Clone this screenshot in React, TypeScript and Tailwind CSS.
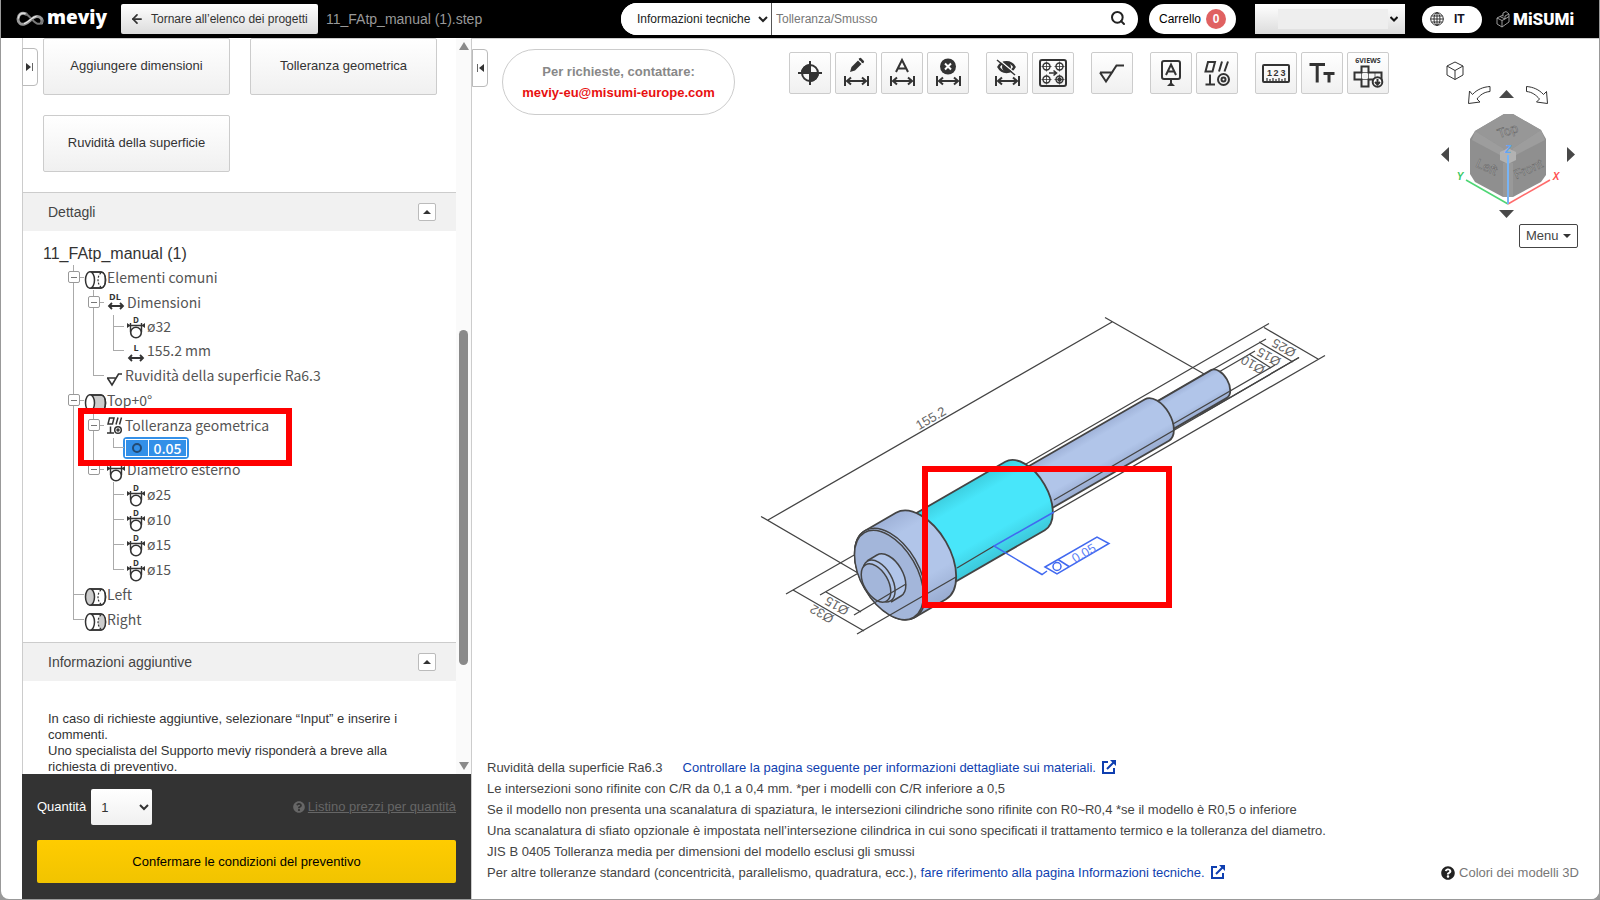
import React from 'react';
import { ArrowLeft, Search } from 'lucide-react';
import { FaQuestionCircle } from 'react-icons/fa';

type Guide = 'line' | 'tee' | 'elbow' | 'open' | 'openLast' | 'blank';
type IconName = 'common' | 'side' | 'left' | 'right' | 'dl' | 'd' | 'l' | 'rough' | 'geo';

interface TreeRow {
  guides: Guide[];
  icon?: IconName;
  label: string;
  height: string;
  selected?: boolean;
}

const TREE: TreeRow[] = [
  { guides: ['open'], icon: 'common', label: 'Elementi comuni', height: 'h-[25px]' },
  { guides: ['line', 'open'], icon: 'dl', label: 'Dimensioni', height: 'h-[25px]' },
  { guides: ['line', 'line', 'tee'], icon: 'd', label: 'ø32', height: 'h-[23px]' },
  { guides: ['line', 'line', 'elbow'], icon: 'l', label: '155.2 mm', height: 'h-[25px]' },
  { guides: ['line', 'elbow'], icon: 'rough', label: 'Ruvidità della superficie Ra6.3', height: 'h-[25px]' },
  { guides: ['open'], icon: 'side', label: 'Top+0°', height: 'h-[25px]' },
  { guides: ['line', 'open'], icon: 'geo', label: 'Tolleranza geometrica', height: 'h-[25px]' },
  { guides: ['line', 'line', 'elbow'], label: '0.05', height: 'h-[19px]', selected: true },
  { guides: ['line', 'openLast'], icon: 'd', label: 'Diametro esterno', height: 'h-[25px]' },
  { guides: ['line', 'blank', 'tee'], icon: 'd', label: 'ø25', height: 'h-[25px]' },
  { guides: ['line', 'blank', 'tee'], icon: 'd', label: 'ø10', height: 'h-[25px]' },
  { guides: ['line', 'blank', 'tee'], icon: 'd', label: 'ø15', height: 'h-[25px]' },
  { guides: ['line', 'blank', 'elbow'], icon: 'd', label: 'ø15', height: 'h-[25px]' },
  { guides: ['tee'], icon: 'left', label: 'Left', height: 'h-[25px]' },
  { guides: ['elbow'], icon: 'right', label: 'Right', height: 'h-[25px]' },
];

const Cylinder: React.FC<{ kind: IconName }> = ({ kind }) => (
  <svg viewBox="0 0 23 20" className="mt-1 h-5 w-[23px] shrink-0" fill="none" stroke="#333" strokeWidth="1.5">
    <path d="M6 2H17C23 2 23 18 17 18H6Z" fill={kind === 'side' ? '#ccc' : '#fff'} />
    {kind === 'right' && <path d="M17 2C13 6 13 14 17 18C23 16 23 4 17 2Z" fill="#ccc" stroke="none" />}
    {kind !== 'side' && <path d="M17 3C13 6 13 14 17 17" strokeDasharray="2 1.5" strokeWidth="1.2" />}
    <path d="M6 2H17C23 2 23 18 17 18H6" />
    <ellipse cx="6" cy="10" rx="4.500" ry="8.200" fill={kind === 'left' ? '#ccc' : '#fff'} />
  </svg>
);

const DoubleArrow: React.FC<{ y: number; x1: number; x2: number }> = ({ y, x1, x2 }) => (
  <path
    d={`M${x1} ${y}H${x2}M${x1 + 3} ${y - 3}L${x1} ${y}L${x1 + 3} ${y + 3}M${x2 - 3} ${y - 3}L${x2} ${y}L${x2 - 3} ${y + 3}`}
    fill="none"
    stroke="#333"
    strokeWidth="1.8"
  />
);

const LETTER_ICON = "h-[30px] w-[23px] shrink-0 font-['Open_Sans',sans-serif] font-bold";

const TreeIcon: React.FC<{ name: IconName }> = ({ name }) => {
  switch (name) {
    case 'dl':
      return (
        <svg viewBox="0 0 23 30" className={LETTER_ICON} fill="#333">
          <text x="5" y="12" fontSize="9">DL</text>
          <DoubleArrow y={18} x1={5} x2={19} />
        </svg>
      );
    case 'l':
      return (
        <svg viewBox="0 0 23 30" className={LETTER_ICON} fill="#333">
          <text x="9.500" y="15" fontSize="9">L</text>
          <DoubleArrow y={22} x1={5} x2={19} />
        </svg>
      );
    case 'd':
      return (
        <svg viewBox="0 0 23 30" className={LETTER_ICON} fill="#333">
          <text x="9" y="11" fontSize="8">D</text>
          <path d="M3 13.500H21M6.500 11V20M17.500 11V20" stroke="#333" strokeWidth="1.400" fill="none" />
          <path d="M3 11L6.500 13.500L3 16ZM21 11L17.500 13.500L21 16Z" />
          <circle cx="12" cy="20.500" r="5.300" fill="#fff" stroke="#333" strokeWidth="1.600" />
        </svg>
      );
    case 'rough':
      return (
        <svg viewBox="0 0 21 20" className="mt-2 h-5 w-[21px] shrink-0" fill="none" stroke="#333" strokeWidth="1.6">
          <path d="M3 8H11.500M3.500 8L8 15L14.500 4H18" />
        </svg>
      );
    case 'geo':
      return (
        <svg viewBox="0 0 21 20" className="h-5 w-[21px] shrink-0" fill="none" stroke="#333" strokeWidth="1.5">
          <path d="M5.500 2H10L8.500 8H4ZM12 8.500L14 1.500M15.500 8.500L17.500 1.500M6.500 10.500V17M3 17H10" />
          <circle cx="14" cy="14" r="3.300" />
          <circle cx="14" cy="14" r="1" />
        </svg>
      );
    default:
      return <Cylinder kind={name} />;
  }
};

const GuideCell: React.FC<{ guide: Guide }> = ({ guide }) => {
  const toggle = guide === 'open' || guide === 'openLast';
  const branch = toggle || guide === 'tee' || guide === 'elbow';
  const below = guide === 'line' || guide === 'tee' || guide === 'open';
  return (
    <div className="relative flex w-5 shrink-0 flex-col self-stretch pl-[9px]">
      <div className={`h-1/2 border-[#aaa] ${guide === 'blank' ? '' : 'border-l'} ${branch ? 'border-b' : ''}`} />
      <div className={`h-1/2 border-[#aaa] ${below ? 'border-l' : ''}`} />
      {toggle && (
        <button
          aria-label="Comprimi"
          className="absolute left-1 top-1.5 flex h-3 w-3 items-center justify-center rounded-xs border border-[#999] bg-white"
        >
          <span className="h-px w-1.5 bg-[#777]" />
        </button>
      )}
    </div>
  );
};

const FeatureTree: React.FC = () => (
  <div className="relative pb-2.5 pl-[41px] pt-[34px] text-sm text-[#555] font-['Noto_Sans_CJK_JP','Noto_Sans',sans-serif]">
    <ul>
      {TREE.map((row, index) => (
        <li key={index} className={`flex items-center ${row.height}`}>
          {row.guides.map((guide, i) => (
            <GuideCell key={i} guide={guide} />
          ))}
          {row.icon && <TreeIcon name={row.icon} />}
          {row.selected ? (
            <span className="-my-2 -ml-px flex h-[22px] w-[66px] shrink-0 rounded-sm bg-[#3390e8] p-0.5 font-medium text-white">
              <span className="flex grow border border-white">
                <span className="flex w-[23px] items-center justify-center border-r border-white">
                  <span className="h-2.5 w-2.5 rounded-full border-2 border-[#234a73]" />
                </span>
                <span className="flex grow items-center justify-center leading-4">{row.label}</span>
              </span>
            </span>
          ) : (
            <span className="whitespace-nowrap pb-0.5 leading-5">{row.label}</span>
          )}
        </li>
      ))}
    </ul>
    <div className="pointer-events-none absolute left-[55px] top-[177px] h-[58px] w-[214px] border-[6px] border-[#ff0000]" />
  </div>
);

const SectionHeader: React.FC<{ title: string }> = ({ title }) => (
  <div className="flex h-[39px] items-center justify-between border-t border-[#ccc] bg-[#f1f1f1] pl-[25px] pr-5">
    <h2 className="text-sm text-[#444]">{title}</h2>
    <button
      aria-label={`Comprimi ${title}`}
      className="flex h-[18px] w-[18px] items-center justify-center rounded-xs border border-[#bbb] bg-white"
    >
      <svg viewBox="0 0 8 4" className="h-1 w-2">
        <path d="M0 4L4 0L8 4Z" fill="#333" />
      </svg>
    </button>
  </div>
);

const PANEL_BUTTON =
  'h-[57px] rounded-xs border border-[#ccc] bg-linear-to-b from-white to-[#f0f0f0] pb-0.5 text-[13px] text-[#333]';

const Sidebar: React.FC = () => (
  <aside className="relative flex w-[450px] shrink-0 flex-col border-x border-[#ccc] bg-white">
    <div className="flex min-h-0 flex-1">
      <div className="min-w-0 flex-1 overflow-hidden">
        <div className="grid grid-cols-2 gap-5 pb-5 pl-5 pr-[19px]">
          <button className={PANEL_BUTTON}>Aggiungere dimensioni</button>
          <button className={PANEL_BUTTON}>Tolleranza geometrica</button>
          <button className={PANEL_BUTTON}>Ruvidità della superficie</button>
        </div>
        <SectionHeader title="Dettagli" />
        <div className="relative">
          <h3 className="absolute left-5 top-[13px] text-base leading-5 text-[#333]">11_FAtp_manual (1)</h3>
          <FeatureTree />
        </div>
        <SectionHeader title="Informazioni aggiuntive" />
        <div className="h-[93px] pl-[25px] pr-10 pt-[30px] text-[13px] leading-4 text-[#333]">
          <p>In caso di richieste aggiuntive, selezionare “Input” e inserire i commenti.</p>
          <p>Uno specialista del Supporto meviy risponderà a breve alla richiesta di preventivo.</p>
        </div>
      </div>
      <div className="flex w-[15px] shrink-0 flex-col items-center bg-[#fafafa] py-1">
        <svg viewBox="0 0 10 8" className="h-2 w-2.5">
          <path d="M0 8L5 0L10 8Z" fill="#8a8a8a" />
        </svg>
        <div className="grow-[280]" />
        <div className="w-[9px] grow-[335] rounded-full bg-[#8a8a8a]" />
        <div className="grow-[97]" />
        <svg viewBox="0 0 10 8" className="h-2 w-2.5">
          <path d="M0 0L5 8L10 0Z" fill="#8a8a8a" />
        </svg>
      </div>
    </div>
    <div className="-ml-px bg-[#333] px-[15px] pb-4 pt-[15px]">
      <div className="flex items-center text-[13px]">
        <label htmlFor="quantity" className="text-white">Quantità</label>
        <select
          id="quantity"
          defaultValue="1"
          className="ml-[5px] h-9 w-[61px] rounded-xs bg-linear-to-b from-white to-[#f0f0f0] pl-1.5 pr-1 text-[#333]"
        >
          <option>1</option>
        </select>
        <a href="#" className="ml-auto flex items-center gap-[3px] text-[#666]">
          <FaQuestionCircle className="h-3 w-3" />
          <span className="underline">Listino prezzi per quantità</span>
        </a>
      </div>
      <button className="mt-[15px] h-[43px] w-full rounded-xs bg-linear-to-b from-[#ffcc00] to-[#f1c400] text-[13px] text-black">
        Confermare le condizioni del preventivo
      </button>
    </div>
    <button
      aria-label="Espandi pannello"
      className="absolute -left-px top-2.5 flex h-[38px] w-4 items-center justify-center rounded-r-sm border border-[#bbb] bg-white"
    >
      <svg viewBox="0 0 8 8" className="h-2 w-2">
        <path d="M0 0L5 4L0 8Z" fill="#333" />
        <path d="M6.500 0V8" stroke="#666" />
      </svg>
    </button>
    <button
      aria-label="Chiudi pannello"
      className="absolute -right-[17px] top-[11px] flex h-[38px] w-4 items-center justify-center rounded-r-sm border border-[#bbb] bg-white"
    >
      <svg viewBox="0 0 8 8" className="h-2 w-2">
        <path d="M8 0L3 4L8 8Z" fill="#333" />
        <path d="M1.500 0V8" stroke="#666" />
      </svg>
    </button>
  </aside>
);

const Header: React.FC = () => (
  <header className="flex h-[38px] shrink-0 items-center bg-black pl-[15px] pr-7 text-xs">
    <a href="#" aria-label="meviy" className="flex w-[91px] shrink-0 items-center text-white">
      <svg viewBox="0 0 28 16" className="h-4 w-7 shrink-0" fill="none" strokeLinecap="round">
        <path d="M10 3C5 1 2 4 2 8C2 12 5 14 8.500 13C14 11.500 16 6 20.500 5.500C25 5 27 9 25.500 12" stroke="#999" strokeWidth="3" />
        <path d="M10 3C14 5 17 11 21 12.500C24 13.500 26 12 26.500 9.500" stroke="#777" strokeWidth="2" />
        <path d="M9 2.500C5 1.500 2.500 4 2.500 7" stroke="#ddd" strokeWidth="1.500" />
        <path d="M8.500 12.500C13 11 16 6 20 5.500" stroke="#eee" strokeWidth="1.200" />
      </svg>
      <span className="ml-[3px] pb-1 text-[19px] font-extrabold leading-6 font-['Open_Sans',sans-serif]">meviy</span>
    </a>
    <button className="ml-3.5 flex h-[30px] w-[197px] shrink-0 items-center gap-[7px] rounded-xs bg-linear-to-b from-white to-[#dcdcdc] pl-[9px] text-[#333]">
      <ArrowLeft className="h-3.5 w-3.5" strokeWidth={3} />
      Tornare all’elenco dei progetti
    </button>
    <span className="ml-2 whitespace-nowrap text-sm text-[#999]">11_FAtp_manual (1).step</span>
    <div className="ml-auto flex h-8 w-[517px] shrink-0 items-center overflow-hidden rounded-full bg-white">
      <select aria-label="Categoria" className="h-full w-[151px] shrink-0 border-r border-[#555] bg-white pl-3 pr-0.5 text-[#222]">
        <option>Informazioni tecniche</option>
      </select>
      <input
        type="text"
        aria-label="Cerca"
        placeholder="Tolleranza/Smusso"
        className="h-full min-w-0 grow pl-1 placeholder:text-[#777] focus:outline-none"
      />
      <button aria-label="Cerca" className="mr-3 pb-0.5">
        <Search className="h-4 w-4 text-[#222]" strokeWidth={3} />
      </button>
    </div>
    <button className="ml-[11px] flex h-[30px] w-[87px] shrink-0 items-center justify-between rounded-full bg-white px-2.5 text-black">
      Carrello
      <span className="flex h-5 w-5 items-center justify-center rounded-full bg-[#e06161] font-bold text-white">0</span>
    </button>
    <button
      aria-label="Account"
      className="ml-[19px] flex h-[30px] w-[150px] shrink-0 items-center justify-between bg-linear-to-b from-white to-[#dcdcdc] pl-[23px] pr-[7px]"
    >
      <span className="h-5 w-[110px] bg-[#eee]" />
      <svg viewBox="0 0 8 6" className="h-1.5 w-2" fill="none" stroke="#111" strokeWidth="2">
        <path d="M0.500 1L4 4.500L7.500 1" />
      </svg>
    </button>
    <button className="ml-[17px] flex h-[27px] w-[60px] shrink-0 items-center gap-2.5 rounded-full bg-white pl-2 font-bold text-[#112]">
      <svg viewBox="0 0 14 14" className="h-3.5 w-3.5" fill="none" stroke="#222" strokeWidth="0.9">
        <circle cx="7" cy="7" r="6.300" />
        <ellipse cx="7" cy="7" rx="3" ry="6.300" />
        <path d="M7 0.500V13.500M0.500 7H13.500M1.500 4H12.500M1.500 10H12.500" />
      </svg>
      IT
    </button>
    <a href="#" aria-label="MiSUMi" className="ml-3.5 flex w-[75px] shrink-0 items-center gap-[3px] text-white">
      <svg viewBox="0 0 14 17" className="h-[17px] w-3.5 shrink-0" fill="none" stroke="#aaa" strokeWidth="0.9">
        <path d="M1 7L6 9.500V16L1 13ZM6 9.500L9 8V5L13 3V11L6 16M1 7L4 5.500L9 8M7 5.500V2L10 0.500L13 3M4 5.500L7 4M9 8L13 5.500" />
      </svg>
      <span className="text-[17px] font-black leading-5 font-['Roboto',sans-serif]">MiSUMi</span>
    </a>
  </header>
);

const DIM_ARROW = 'M10 24V34M33 24V34M12 29H31M16 25.500L12 29L16 32.500M27 25.500L31 29L27 32.500';

const TOOLS: { label: string; art: React.ReactNode }[][] = [
  [
    {
      label: 'Origine',
      art: (
        <>
          <circle cx="21" cy="21" r="8" />
          <path d="M21 9V33M9 21H33" />
          <path d="M21 21V13A8 8 0 0 0 13 21ZM21 21V29A8 8 0 0 0 29 21Z" fill="#333" />
        </>
      ),
    },
    {
      label: 'Modifica quota',
      art: (
        <>
          <path d="M15 20L16.500 15L23 8.500L26.500 12L20 18.500Z" fill="#333" stroke="none" />
          <path d="M24 7.500L25.500 7L28 9.500L27.500 11" fill="#333" />
          <path d={DIM_ARROW} />
        </>
      ),
    },
    {
      label: 'Testo quota',
      art: (
        <>
          <path d="M15 20L21 8L27 20M17 16.500H25" />
          <path d={DIM_ARROW} />
        </>
      ),
    },
    {
      label: 'Elimina quota',
      art: (
        <>
          <circle cx="21" cy="14.500" r="8" fill="#333" stroke="none" />
          <path d="M18 11.500L24 17.500M24 11.500L18 17.500" stroke="#fff" />
          <path d={DIM_ARROW} />
        </>
      ),
    },
  ],
  [
    {
      label: 'Nascondi quota',
      art: (
        <>
          <path d="M12.500 15C16 8.500 25 8.500 28.500 15C25 21.500 16 21.500 12.500 15Z" strokeWidth="2.500" />
          <circle cx="20.500" cy="15" r="3.500" fill="#333" />
          <path d="M12 7L30 22" stroke="#fff" strokeWidth="1.500" />
          <path d="M11 8L29 23" strokeWidth="1.500" />
          <path d={DIM_ARROW} />
        </>
      ),
    },
    {
      label: 'Raggruppa fori',
      art: (
        <>
          <rect x="8" y="8" width="26" height="26" rx="2" />
          <g strokeWidth="1.400">
            <circle cx="14.500" cy="14.500" r="3.500" />
            <circle cx="27.500" cy="14.500" r="3.500" />
            <circle cx="14.500" cy="27.500" r="3.500" />
            <circle cx="27.500" cy="27.500" r="3.500" />
            <circle cx="27.500" cy="27.500" r="1.500" fill="#333" />
          </g>
          <path d="M14.500 9.500V19.500M9.500 14.500H19.500M27.500 9.500V19.500M22.500 14.500H32.500M14.500 22.500V32.500M9.500 27.500H19.500M27.500 22.500V32.500M22.500 27.500H32.500" strokeWidth="0.800" />
          <path d="M17 21H24M21.500 18.500L24.500 21L21.500 23.500" strokeWidth="1.600" />
        </>
      ),
    },
  ],
  [{ label: 'Rugosità', art: <path d="M9 20.500H21L15 29.500L9 20.500M15 29.500L25.500 13.500H33" /> }],
  [
    {
      label: 'Riferimento',
      art: (
        <>
          <rect x="12" y="9" width="18" height="18" rx="2" />
          <path d="M16 23L21 12.500L26 23M18 19.500H24" />
          <path d="M21 27V31" />
          <path d="M17 34L21 30L25 34Z" fill="#333" stroke="none" />
        </>
      ),
    },
    {
      label: 'Tolleranza',
      art: (
        <>
          <path d="M12 10H19L16.500 19.500H9.500ZM23 19.500L26 9.500M28.500 19.500L32 9.500M14 22.500V32.500M9.500 32.500H19" />
          <circle cx="27.500" cy="27.500" r="5.500" />
          <circle cx="27.500" cy="27.500" r="2" />
        </>
      ),
    },
  ],
  [
    {
      label: 'Misura',
      art: (
        <>
          <rect x="8" y="13" width="26" height="17" rx="1" />
          <path d="M12 29V26M15 29V27M18 29V26M21 29V27M24 29V26M27 29V27M30 29V26" strokeWidth="1.200" />
          <g fontSize="9" fontWeight="700" textAnchor="middle" fill="#333" stroke="none">
            <text x="14.500" y="23.500">1</text>
            <text x="21" y="23.500">2</text>
            <text x="28" y="23.500">3</text>
          </g>
        </>
      ),
    },
    {
      label: 'Testo',
      art: <path d="M8.500 12.500H24M16.200 12.500V30.500M22.500 21.500H33.500M28 21.500V30.500" strokeWidth="3" />,
    },
    {
      label: 'Sei viste',
      art: (
        <>
          <path d="M14.500 14.500H21.500V20.500H34.500V27.500H21.500V34.500H14.500V27.500H7.500V20.500H14.500Z" />
          <path d="M14.500 20.500H21.500V27.500H14.500ZM28 20.500V27.500" strokeWidth="0.700" />
          <circle cx="30.500" cy="30" r="4.800" fill="#fff" />
          <path d="M30.500 27V31.500M28 30L30.500 32.500L33 30" />
          <text x="21" y="11" fontSize="7" fontWeight="700" textAnchor="middle" fill="#333" stroke="none" fontFamily="Open Sans, sans-serif">6VIEWS</text>
        </>
      ),
    },
  ],
];

const Toolbar: React.FC = () => (
  <div className="mt-[13px] flex gap-[17px]">
    {TOOLS.map((group, index) => (
      <div key={index} className="flex gap-1">
        {group.map((tool) => (
          <button
            key={tool.label}
            aria-label={tool.label}
            className="h-[42px] w-[42px] rounded-xs border border-[#ccc] bg-linear-to-b from-white to-[#f0f0f0]"
          >
            <svg viewBox="1 1 40 40" className="h-10 w-10" fill="none" stroke="#333" strokeWidth="2">
              {tool.art}
            </svg>
          </button>
        ))}
      </div>
    ))}
  </div>
);

const ViewCube: React.FC = () => (
  <svg viewBox="1436 56 144 166" className="h-[166px] w-36 font-['Liberation_Sans',sans-serif]">
    <g fill="none" stroke="#333" strokeWidth="1">
      <path d="M1455 62L1463 66V75L1455 79.500L1447 75V66ZM1447 66L1455 70.500L1463 66M1455 70.500V79.500" />
      <path d="M1490 86.500V91.500C1484 92 1480 95 1477 99L1480 102L1468.500 103.500L1469.500 91L1472.500 94.500C1477 89.500 1483 87 1490 86.500Z" />
      <path d="M1526.500 86.500V91.500C1532 92 1536 95 1539.500 99L1536.500 102L1547.500 103.500L1546.500 91.500L1543.500 94.500C1539 89.500 1533 87 1526.500 86.500Z" />
    </g>
    <path d="M1499 98L1506.500 90L1514 98ZM1499 210H1514L1506.500 218ZM1449 147V162L1441 154.500ZM1567 147V162L1575 154.500Z" fill="#484848" />
    <path d="M1504 114H1513L1541 130L1546 139V175L1541 182L1513 197H1503L1475 182L1470 174V139L1475 131Z" fill="#8f8f8f" />
    <path d="M1475 131L1504 114H1513L1541 130L1512 149H1504Z" fill="#979797" />
    <path d="M1475 131L1504 149L1500 155L1472 140ZM1541 130L1512 149L1516 155L1545 140Z" fill="#9d9d9d" />
    <path d="M1503 163H1513V197H1503Z" fill="#999" />
    <path d="M1508 148L1516 152V160L1508 164L1500 160V152Z" fill="#b2b2b2" />
    <g fill="#b0b0b0" stroke="#666" strokeWidth="0.500" fontSize="13" textAnchor="middle">
      <text transform="translate(1509 135) rotate(-18)">Top</text>
      <text transform="translate(1485 171) rotate(24)">Left</text>
      <text transform="translate(1530 173) rotate(-24)">Front</text>
    </g>
    <path d="M1508 204L1466 180" stroke="#4fd675" strokeWidth="1.500" />
    <path d="M1508 204L1550 180" stroke="#ff6b6b" strokeWidth="1.500" />
    <path d="M1508 204V155" stroke="#78b4f5" strokeWidth="2" />
    <g fontSize="10" fontStyle="italic" fontWeight="700" textAnchor="middle">
      <text x="1460" y="180" fill="#37c962">Y</text>
      <text x="1556" y="180" fill="#ff5050">X</text>
      <text x="1508" y="153" fill="#60a5f5">Z</text>
    </g>
  </svg>
);

interface ShaftPart {
  id: string;
  from: [number, number];
  to: [number, number];
  radius: number;
  colors: [string, string, string];
}

const BLUE: [string, string, string] = ['#9fb2d8', '#b1c5e9', '#98abd0'];
const CYAN: [string, string, string] = ['#3dcfe0', '#48e6fa', '#3cc8da'];

// Drawn back to front
const SHAFT: ShaftPart[] = [
  { id: 'tip', from: [1157, 420], to: [1219, 384], radius: 16, colors: BLUE },
  { id: 'neck', from: [1025, 496], to: [1157, 420], radius: 24, colors: BLUE },
  { id: 'seat', from: [921, 556], to: [1025, 496], radius: 39.5, colors: CYAN },
  { id: 'flange', from: [890, 574], to: [921, 556], radius: 50, colors: BLUE },
];

const Part: React.FC<{ part: ShaftPart }> = ({ part }) => {
  const { from, to, radius, id, colors } = part;
  const dx = radius * 0.5;
  const dy = radius * 0.866;
  const minor = radius * 0.577;
  return (
    <>
      <linearGradient id={id} gradientUnits="userSpaceOnUse" x1={from[0] - dx} y1={from[1] - dy} x2={from[0] + dx} y2={from[1] + dy}>
        <stop offset="0" stopColor={colors[0]} />
        <stop offset="0.200" stopColor={colors[1]} />
        <stop offset="0.700" stopColor={colors[1]} />
        <stop offset="1" stopColor={colors[2]} />
      </linearGradient>
      <path
        d={`M${from[0] - dx} ${from[1] - dy}L${to[0] - dx} ${to[1] - dy}A${radius} ${minor} 60 0 1 ${to[0] + dx} ${to[1] + dy}L${from[0] + dx} ${from[1] + dy}A${radius} ${minor} 60 0 1 ${from[0] - dx} ${from[1] - dy}Z`}
        fill={`url(#${id})`}
        stroke="#444"
        strokeWidth="1.800"
      />
    </>
  );
};

const ShaftModel: React.FC = () => (
  <div className="relative h-[330px] w-[570px]">
    <svg viewBox="760 310 570 330" className="h-full w-full font-['Liberation_Sans',sans-serif]" fill="none">
      <g stroke="#444" strokeWidth="1.300">
        <path d="M761 516.500L858 573M768 520L1112 322M1105 317.500L1205 374.500" />
        <path d="M786 594L856 554M820 595L862 571" />
        <path d="M1269 323.500L1026 464M1264 327.500L1318 359M1325 355.500L1054 512" />
        <path d="M1259 342L1293 362M1266 339L1142 410M1299 357.500L1200 415" />
        <path d="M1249 354L1271 368M1255 351L1212 376" />
      </g>
      {SHAFT.map((part) => (
        <Part key={part.id} part={part} />
      ))}
      <g stroke="#444" strokeWidth="1.500">
        <ellipse cx="890" cy="574" rx="50" ry="29" transform="rotate(60 890 574)" fill="#b1c5e9" />
        <ellipse cx="889" cy="575" rx="49" ry="28" transform="rotate(60 889 575)" fill="#a3b6da" />
        <path d="M867 561L877 555A23.500 13.600 60 0 1 901 596L891 602Z" fill="#b1c5e9" stroke="none" />
        <path d="M867 561L877 555A23.500 13.600 60 0 1 901 596L891 602" />
        <ellipse cx="879" cy="581" rx="23" ry="13" transform="rotate(60 879 581)" fill="#b1c5e9" />
        <ellipse cx="876" cy="583" rx="21" ry="12" transform="rotate(60 876 583)" fill="#a3b6da" />
      </g>
      <g stroke="#444" strokeWidth="1.300">
        <path d="M1275 365L1173 424M1299 357.500L1054 500" />
        <path d="M994 546L957 568M857 634L956 577M854 615L906 584M793 590L864 631M826 592L861 612" />
      </g>
      <g stroke="#4169f0" strokeWidth="1.500">
        <path d="M1054 512L994 546L1042 574.500L1047 571" />
        <path d="M1045 567L1097 537L1109 543.500L1057 574ZM1058 559.500L1069 566.500" />
        <circle cx="1057" cy="566.500" r="4" />
      </g>
      <g fill="#666" fontSize="13" textAnchor="middle">
        <text transform="translate(933 422) rotate(-30)">155.2</text>
        <text transform="translate(1286 344) rotate(210)">Ø25</text>
        <text transform="translate(1271 353) rotate(210)">Ø15</text>
        <text transform="translate(1255 361) rotate(210)">Ø10</text>
        <text transform="translate(839 602) rotate(210)">Ø15</text>
        <text transform="translate(824 610) rotate(210)">Ø32</text>
        <text transform="translate(1086 557) rotate(-30)" fill="#5b80f5">0.05</text>
      </g>
    </svg>
    <div className="pointer-events-none absolute left-[162px] top-[156px] h-[142px] w-[250px] border-[6px] border-[#ff0000]" />
  </div>
);

const LinkIcon: React.FC = () => (
  <svg viewBox="0 0 14 14" className="mb-1 ml-1.5 inline h-3.5 w-3.5" fill="none" stroke="currentColor" strokeWidth="2">
    <path d="M6 2H1V13H12V8M5 9L12 2" />
    <path d="M8 0H14V6Z" fill="currentColor" stroke="none" />
  </svg>
);

const Notes: React.FC = () => (
  <div className="flex items-end justify-between pb-4 pl-[15px] pr-5 text-[13px] leading-[21px] text-[#444]">
    <div>
      <p>
        Ruvidità della superficie Ra6.3
        <a href="#" className="ml-5 text-[#0f3fb0]">
          Controllare la pagina seguente per informazioni dettagliate sui materiali.
          <LinkIcon />
        </a>
      </p>
      <p>Le intersezioni sono rifinite con C/R da 0,1 a 0,4 mm. *per i modelli con C/R inferiore a 0,5</p>
      <p>Se il modello non presenta una scanalatura di spaziatura, le intersezioni cilindriche sono rifinite con R0~R0,4 *se il modello è R0,5 o inferiore</p>
      <p>Una scanalatura di sfiato opzionale è impostata nell’intersezione cilindrica in cui sono specificati il trattamento termico e la tolleranza del diametro.</p>
      <p>JIS B 0405 Tolleranza media per dimensioni del modello esclusi gli smussi</p>
      <p>
        Per altre tolleranze standard (concentricità, parallelismo, quadratura, ecc.),{' '}
        <a href="#" className="text-[#0f3fb0]">
          fare riferimento alla pagina Informazioni tecniche.
          <LinkIcon />
        </a>
      </p>
    </div>
    <button className="flex items-center gap-1 text-[#777]">
      <FaQuestionCircle className="h-3.5 w-3.5 text-[#222]" />
      Colori dei modelli 3D
    </button>
  </div>
);

const Viewer: React.FC = () => (
  <main className="flex min-w-0 flex-1 flex-col border-t border-[#ccc] bg-white">
    <div className="flex items-start pl-[30px] pr-[19px]">
      <div className="mt-2.5 flex h-[66px] w-[233px] shrink-0 flex-col items-center justify-center rounded-full border border-[#ccc] text-[13px] font-bold leading-[21px]">
        <span className="text-[#888]">Per richieste, contattare:</span>
        <a href="#" className="text-[#e81010]">meviy-eu@misumi-europe.com</a>
      </div>
      <div className="ml-[54px]">
        <Toolbar />
      </div>
      <div className="ml-auto mt-[17px] flex flex-col items-end">
        <ViewCube />
        <button className="mr-0.5 mt-0.5 flex h-6 w-[59px] items-center justify-between rounded-xs border border-[#444] bg-white px-1.5 text-[13px] text-[#444]">
          Menu
          <svg viewBox="0 0 8 4" className="h-1 w-2">
            <path d="M0 0L4 4L8 0Z" fill="#333" />
          </svg>
        </button>
      </div>
    </div>
    <div className="flex flex-1 items-start justify-center pl-[18px] pt-[62px]">
      <ShaftModel />
    </div>
    <Notes />
  </main>
);

export default function App() {
  return (
    <div className="h-screen overflow-hidden bg-[#999] px-px pb-px font-['Liberation_Sans',Arial,sans-serif]">
      <div className="flex h-full flex-col overflow-hidden rounded-b-lg bg-white">
        <Header />
        <div className="flex min-h-0 flex-1">
          <div className="w-[21px] shrink-0" />
          <Sidebar />
          <Viewer />
        </div>
      </div>
    </div>
  );
}
